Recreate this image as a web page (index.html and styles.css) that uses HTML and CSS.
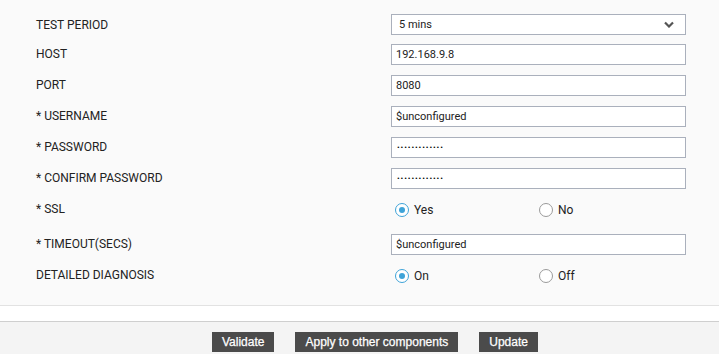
FILE: index.html
```html
<!DOCTYPE html>
<html>
<head>
  <title>Component Configuration</title>
  <link rel="stylesheet" href="styles.css">
</head>
<body>
  <form class="config-form">
    <div class="fields">
      <div class="row first">
        <label>TEST PERIOD</label>
        <div class="select-box">
          <span>5 mins</span>
          <svg class="chevron" width="10" height="7" viewBox="0 0 10 7"><path d="M1 1.5 L5 5.5 L9 1.5" fill="none" stroke="#555" stroke-width="2.2"/></svg>
        </div>
      </div>
      <div class="row">
        <label>HOST</label>
        <input type="text" value="192.168.9.8">
      </div>
      <div class="row">
        <label>PORT</label>
        <input type="text" value="8080">
      </div>
      <div class="row">
        <label>* USERNAME</label>
        <input type="text" value="$unconfigured">
      </div>
      <div class="row">
        <label>* PASSWORD</label>
        <input type="password" class="pass" value="unconfigured1">
      </div>
      <div class="row">
        <label>* CONFIRM PASSWORD</label>
        <input type="password" class="pass" value="unconfigured1">
      </div>
      <div class="row tall">
        <label>* SSL</label>
        <div class="radios">
          <span class="option"><span class="radio checked"></span>Yes</span>
          <span class="option"><span class="radio"></span>No</span>
        </div>
      </div>
      <div class="row">
        <label>* TIMEOUT(SECS)</label>
        <input type="text" value="$unconfigured">
      </div>
      <div class="row">
        <label>DETAILED DIAGNOSIS</label>
        <div class="radios">
          <span class="option"><span class="radio checked"></span>On</span>
          <span class="option"><span class="radio"></span>Off</span>
        </div>
      </div>
    </div>
    <div class="spacer"></div>
    <div class="actions">
      <button type="button">Validate</button>
      <button type="button">Apply to other components</button>
      <button type="submit">Update</button>
    </div>
  </form>
</body>
</html>
```

FILE: styles.css
```css
body {
  margin: 0;
  font-family: Roboto, "Liberation Sans", Arial, sans-serif;
  font-size: 12px;
  color: #222;
  background-color: #f4f4f4;
}

.config-form {
  margin: 0;
}

.fields {
  background-color: #fafafa;
  padding: 13px 0 9px 36px;
  border-bottom: 1px solid #e2e2e2;
}

.row {
  display: grid;
  grid-template-columns: 355px 295px;
  align-items: center;
  height: 21px;
  margin-bottom: 10px;
}

.row.tall {
  margin-bottom: 14px;
}

.row label {
  line-height: 21px;
}

.row.first label {
  padding-top: 2px;
}

.row input,
.select-box {
  box-sizing: border-box;
  width: 295px;
  height: 21px;
  margin: 0;
  padding: 0 4px;
  border: 1px solid #aab0bc;
  background-color: #fff;
  font-family: inherit;
  font-size: 11px;
  color: #222;
  outline: none;
}

.row input.pass {
  font-size: 8px;
  letter-spacing: 0.9px;
  color: #000;
  padding-left: 5px;
}

.select-box {
  display: flex;
  align-items: center;
  justify-content: space-between;
  padding: 0 11px 0 7px;
}

.radios {
  display: flex;
  padding-left: 4px;
}

.option {
  display: flex;
  align-items: center;
  width: 144px;
}

.radio {
  box-sizing: border-box;
  width: 14px;
  height: 14px;
  margin-right: 5px;
  border: 1px solid #9a9a9a;
  border-radius: 50%;
  background-color: #fff;
  position: relative;
}

.radio.checked {
  border-color: #3ea3d8;
}

.radio.checked::after {
  content: "";
  position: absolute;
  top: 3px;
  left: 3px;
  width: 6px;
  height: 6px;
  border-radius: 50%;
  background-color: #3ea3d8;
}

.spacer {
  height: 15px;
  background-color: #fff;
  border-bottom: 1px solid #cfcfcf;
}

.actions {
  display: flex;
  gap: 21px;
  padding: 10px 0 0 212px;
}

.actions button {
  height: 20px;
  padding: 0 10px;
  border: none;
  background-color: #4b4b4b;
  color: #fff;
  font-family: "Liberation Sans", Arial, sans-serif;
  font-size: 12px;
  -webkit-text-stroke: 0.25px #fff;
  cursor: pointer;
}
```
